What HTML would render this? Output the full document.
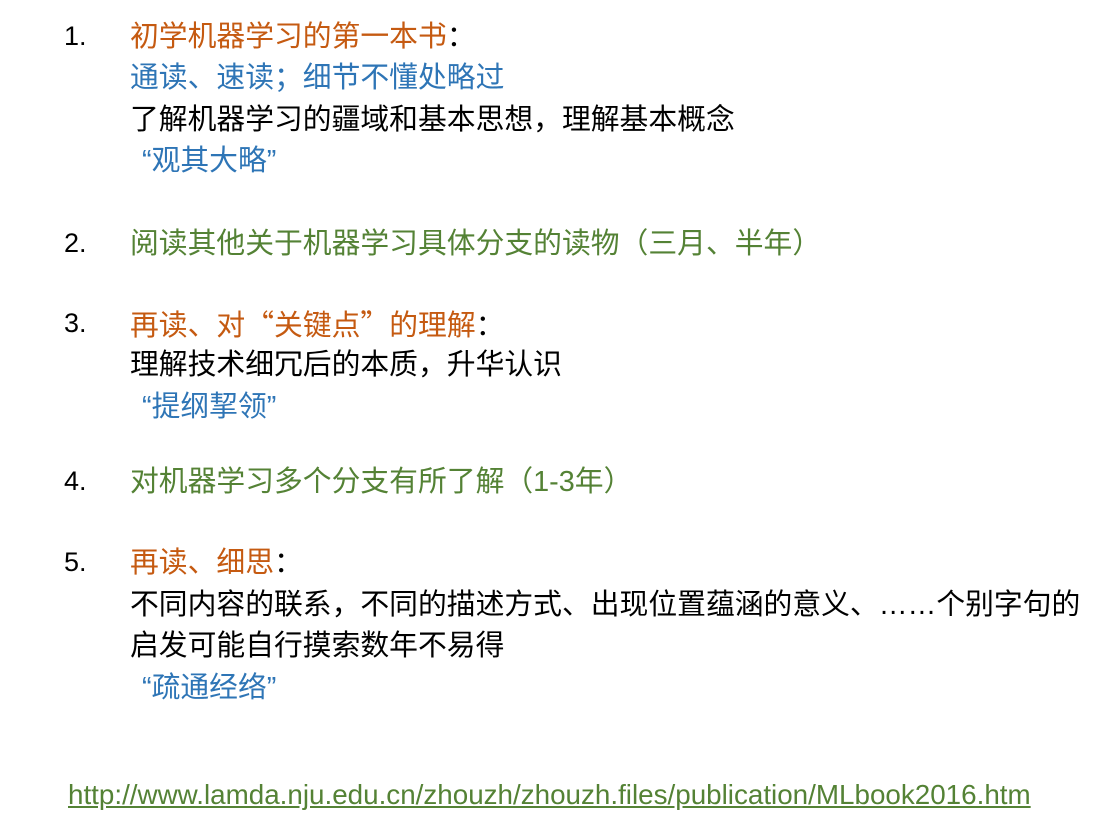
<!DOCTYPE html>
<html><head><meta charset="utf-8"><style>
body{margin:0;width:1120px;height:818px;background:#fff;overflow:hidden;position:relative;font-family:"Liberation Sans","Noto Sans CJK SC",sans-serif;}
div{position:absolute;white-space:nowrap;font-size:28.8px;line-height:36px;}
.n{left:64px;color:#000;font-size:27px;}
.o{color:#C55A11}.b{color:#2E75B6}.g{color:#548235}.k{color:#000}
.t{left:130px}.q{left:142px}
.c{font-family:"Noto Sans CJK SC",sans-serif}
</style></head><body>
<div class="n" style="top:18px">1.</div>
<div class="t" style="top:19px"><span class="o">初学机器学习的第一本书</span><span class="k">：</span></div>
<div class="t b" style="top:60px">通读、速读；细节不懂处略过</div>
<div class="t k" style="top:102px">了解机器学习的疆域和基本思想，理解基本概念</div>
<div class="q b" style="top:143px">“观其大略”</div>
<div class="n" style="top:225px">2.</div>
<div class="t g" style="top:226px">阅读其他关于机器学习具体分支的读物（三月、半年）</div>
<div class="n" style="top:305px">3.</div>
<div class="t" style="top:306px"><span class="o">再读、对<span class="c">“</span>关键点<span class="c">”</span>的理解</span><span class="k">：</span></div>
<div class="t k" style="top:347px">理解技术细冗后的本质，升华认识</div>
<div class="q b" style="top:389px">“提纲挈领”</div>
<div class="n" style="top:463px">4.</div>
<div class="t g" style="top:464px">对机器学习多个分支有所了解（1-3年）</div>
<div class="n" style="top:544px">5.</div>
<div class="t" style="top:545px"><span class="o">再读、细思</span><span class="k">：</span></div>
<div class="t k" style="top:587px">不同内容的联系，不同的描述方式、出现位置蕴涵的意义、……个别字句的</div>
<div class="t k" style="top:628px">启发可能自行摸索数年不易得</div>
<div class="q b" style="top:670px">“疏通经络”</div>
<div class="g" style="left:68px;top:778px;font-size:27.8px;line-height:34px;text-decoration:underline;">http://www.lamda.nju.edu.cn/zhouzh/zhouzh.files/publication/MLbook2016.htm</div>
</body></html>
